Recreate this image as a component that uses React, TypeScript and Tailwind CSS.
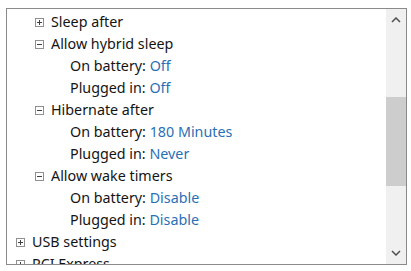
import React from "react";

function Box({ open }: { open: boolean }) {
  return (
    <svg width="9" height="9" viewBox="0 0 9 9" className="shrink-0">
      <rect x="0.5" y="0.5" width="8" height="8" fill="#fff" stroke="#8f8f8f" />
      <line x1="2" y1="4.5" x2="7" y2="4.5" stroke="#404040" />
      {!open && <line x1="4.5" y1="2" x2="4.5" y2="7" stroke="#404040" />}
    </svg>
  );
}

function Node({ indent, open, label }: { indent: string; open: boolean; label: string }) {
  return (
    <div className={`flex items-center h-[22px] ${indent}`}>
      <Box open={open} />
      <span className="ml-[7px]">{label}</span>
    </div>
  );
}

function Val({ label, value }: { label: string; value: string }) {
  return (
    <div className="flex items-center h-[22px] pl-[63px] whitespace-pre">
      <span>{label} </span>
      <span className="text-[#2a6fb5]">{value}</span>
    </div>
  );
}

export default function App() {
  return (
    <div className="w-[411px] h-[271px] bg-white pt-[8px] pl-[6px]">
      <div className="w-[401px] h-[257px] border border-[#8a8a8a] flex overflow-hidden">
        <div
          className="flex-1 overflow-hidden pt-[2px] text-[14.3px] text-[#141414] leading-none"
          style={{ fontFamily: '"Noto Sans", "Open Sans", sans-serif' }}
        >
          <Node indent="pl-[28px]" open={false} label="Sleep after" />
          <Node indent="pl-[28px]" open={true} label="Allow hybrid sleep" />
          <Val label="On battery:" value="Off" />
          <Val label="Plugged in:" value="Off" />
          <Node indent="pl-[28px]" open={true} label="Hibernate after" />
          <Val label="On battery:" value="180 Minutes" />
          <Val label="Plugged in:" value="Never" />
          <Node indent="pl-[28px]" open={true} label="Allow wake timers" />
          <Val label="On battery:" value="Disable" />
          <Val label="Plugged in:" value="Disable" />
          <Node indent="pl-[9px]" open={false} label="USB settings" />
          <Node indent="pl-[9px]" open={false} label="PCI Express" />
        </div>
        <div className="w-[20px] bg-[#f0f0f0] flex flex-col">
          <div className="h-[22px] flex items-center justify-center">
            <svg width="10" height="6" viewBox="0 0 10 6">
              <polyline points="1,5 5,1 9,5" fill="none" stroke="#505050" strokeWidth="1.5" />
            </svg>
          </div>
          <div className="h-[66px]" />
          <div className="h-[89px] bg-[#cdcdcd]" />
          <div className="flex-1" />
          <div className="h-[22px] flex items-center justify-center">
            <svg width="10" height="6" viewBox="0 0 10 6">
              <polyline points="1,1 5,5 9,1" fill="none" stroke="#505050" strokeWidth="1.5" />
            </svg>
          </div>
        </div>
      </div>
    </div>
  );
}
